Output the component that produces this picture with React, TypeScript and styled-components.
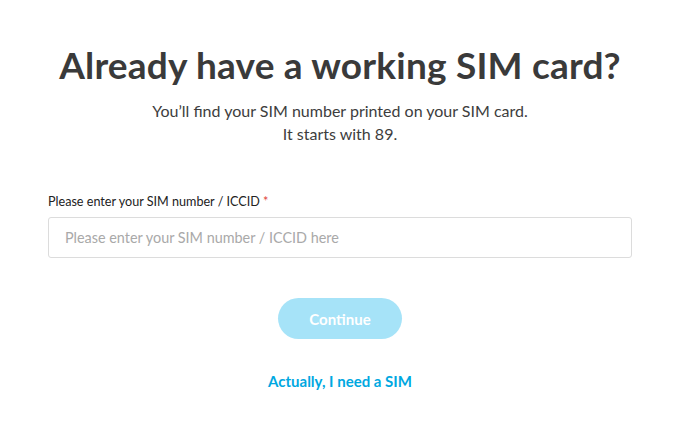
import React from "react";
import styled, { createGlobalStyle } from "styled-components";

const Global = createGlobalStyle`
  html, body { margin: 0; padding: 0; background: #fff; }
  body { font-family: Lato, "Open Sans", sans-serif; color: #3b3b3b; }
  * { box-sizing: border-box; }
`;

const Page = styled.main`
  width: 680px;
  display: flex;
  flex-direction: column;
  align-items: center;
  padding: 42px 48px 0 48px;
`;

const Title = styled.h1`
  margin: 0;
  font-family: Lato, sans-serif;
  font-weight: 700;
  font-size: 37px;
  line-height: 46px;
  color: #3a3a3a;
  letter-spacing: 0.2px;
`;

const Subtitle = styled.p`
  margin: 11px 0 0 0;
  text-align: center;
  font-family: Lato, sans-serif;
  font-size: 16px;
  line-height: 23px;
  color: #3d3d3d;
`;

const Field = styled.div`
  align-self: stretch;
  display: flex;
  flex-direction: column;
  margin-top: 49px;
`;

const Label = styled.label`
  font-family: Lato, sans-serif;
  font-size: 12.6px;
  line-height: 16px;
  color: #222;
  margin-bottom: 7px;
`;

const Required = styled.span`
  color: #e0453a;
`;

const Input = styled.input`
  width: 100%;
  height: 41px;
  border: 1px solid #dcdcdc;
  border-radius: 3px;
  padding: 0 16px;
  font-family: Lato, sans-serif;
  font-size: 14.4px;
  color: #333;
  outline: none;
  &::placeholder { color: #a9a9a9; }
`;

const Button = styled.button`
  margin-top: 40px;
  width: 124px;
  height: 41px;
  border: none;
  border-radius: 21px;
  background: #a6e3f8;
  color: #fff;
  font-family: Lato, sans-serif;
  font-weight: 700;
  font-size: 15px;
  cursor: default;
`;

const LinkText = styled.a`
  margin-top: 33px;
  font-family: Lato, sans-serif;
  font-weight: 700;
  font-size: 15px;
  color: #00a8e1;
  text-decoration: none;
`;

export default function App() {
  return (
    <>
      <Global />
      <Page>
        <Title>Already have a working SIM card?</Title>
        <Subtitle>
          You’ll find your SIM number printed on your SIM card.
          <br />
          It starts with 89.
        </Subtitle>
        <Field>
          <Label>
            Please enter your SIM number / ICCID <Required>*</Required>
          </Label>
          <Input placeholder="Please enter your SIM number / ICCID here" />
        </Field>
        <Button disabled>Continue</Button>
        <LinkText href="#">Actually, I need a SIM</LinkText>
      </Page>
    </>
  );
}
